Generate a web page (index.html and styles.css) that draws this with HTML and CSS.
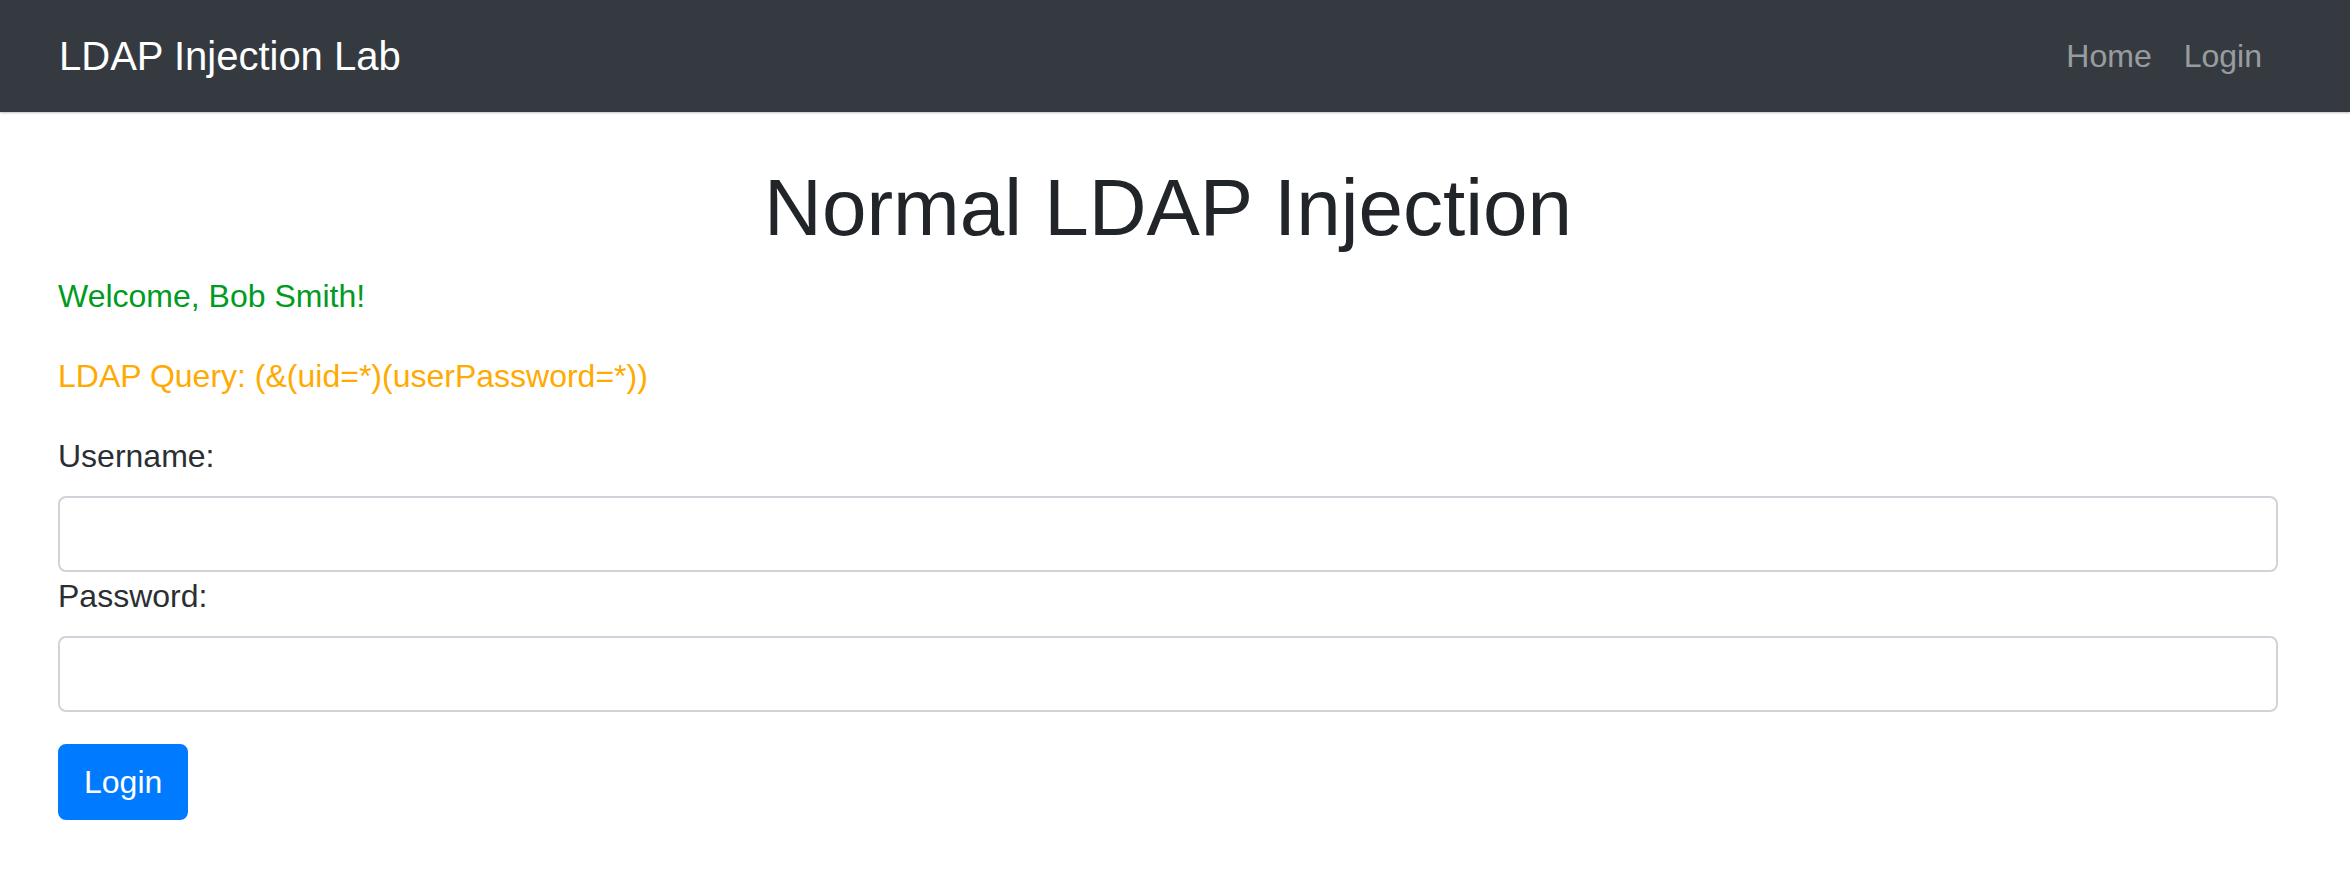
FILE: index.html
```html
<!DOCTYPE html>
<html lang="en">
<head>
    <meta charset="UTF-8">
    <meta name="viewport" content="width=device-width, initial-scale=1.0">
    <title>LDAP Injection Lab</title>
    <link rel="stylesheet" href="styles.css">
</head>
<body>
    <nav class="navbar">
        <a class="brand" href="#">LDAP Injection Lab</a>
        <ul class="nav">
            <li><a class="nav-link" href="#">Home</a></li>
            <li><a class="nav-link" href="#">Login</a></li>
        </ul>
    </nav>

    <main class="page">
        <h1 class="title">Normal LDAP Injection</h1>
        <p class="welcome">Welcome, Bob Smith!</p>
        <p class="query">LDAP Query: (&amp;(uid=*)(userPassword=*))</p>

        <form class="login-form" method="post">
            <label for="username">Username:</label>
            <input type="text" id="username" name="username" class="field">
            <label for="password">Password:</label>
            <input type="password" id="password" name="password" class="field">
            <button type="submit" class="btn">Login</button>
        </form>
    </main>
</body>
</html>
```

FILE: styles.css
```css
body {
    margin: 0;
    font-family: "Liberation Sans", Arial, sans-serif;
    font-size: 32px;
    line-height: 1.5;
    color: #212529;
    background-color: #fff;
}
.navbar {
    display: flex;
    justify-content: space-between;
    align-items: center;
    height: 112px;
    padding: 0 72px 0 59px;
    box-sizing: border-box;
    background-color: #343a40;
    box-shadow: 0 1px 2px rgba(0,0,0,0.25);
}
.brand {
    font-size: 40px;
    line-height: 60px;
    padding: 10px 0;
    color: #fff;
    text-decoration: none;
}
.nav {
    display: flex;
    list-style: none;
    margin: 0;
    padding: 0;
}
.nav-link {
    display: block;
    padding: 16px;
    color: rgba(255,255,255,0.5);
    text-decoration: none;
}
.page {
    padding: 0 72px 0 58px;
}
.title {
    margin: 48px 0 16px;
    font-size: 80px;
    font-weight: 500;
    line-height: 1.2;
    text-align: center;
}
.page p {
    margin: 0 0 32px;
}
.welcome {
    color: #009b1f;
}
.query {
    color: #ffaa00;
}
.login-form label {
    display: block;
    margin-bottom: 16px;
    color: #2b2f33;
}
.field {
    display: block;
    width: 100%;
    height: 76px;
    padding: 12px 24px;
    box-sizing: border-box;
    font: inherit;
    color: #495057;
    border: 2px solid #ced4da;
    border-radius: 8px;
    background-color: #fff;
}
.btn {
    margin-top: 32px;
    padding: 12px 24px;
    font: inherit;
    line-height: 48px;
    color: #fff;
    background-color: #007bff;
    border: 2px solid #007bff;
    border-radius: 8px;
    cursor: pointer;
}
```
